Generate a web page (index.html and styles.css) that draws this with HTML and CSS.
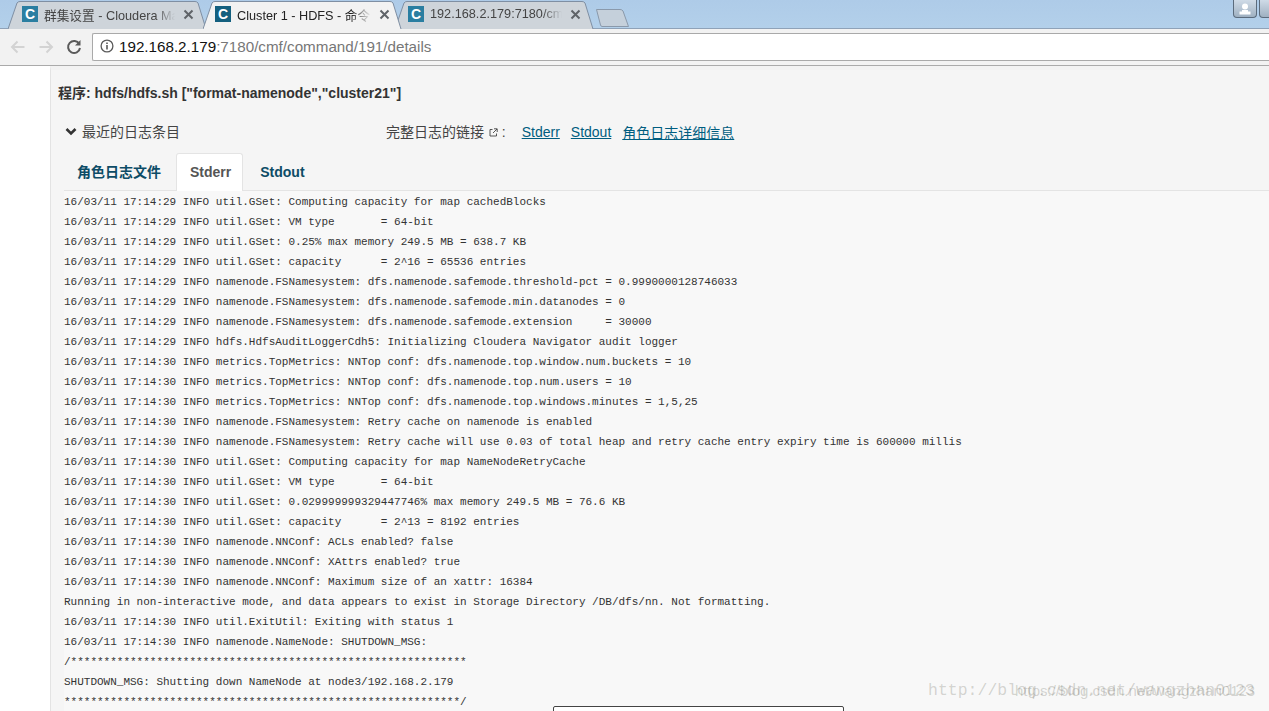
FILE: index.html
```html
<!DOCTYPE html>
<html lang="zh">
<head>
<meta charset="utf-8">
<title>Cluster 1 - HDFS - 命令</title>
<link rel="stylesheet" href="styles.css">
</head>
<body>
<header class="chrome">
  <div class="tabstrip">
    <div class="tab tab-first">
      <svg class="tab-shape" viewBox="0 0 199 28" preserveAspectRatio="none"><path d="M0 28 L9 2 Q10 .5 12 .5 L187 .5 Q189 .5 190 2 L198 28" fill="#ced4da" stroke="#7f8fa3"/></svg>
      <span class="favicon">C</span><span class="tab-title">群集设置 - Cloudera Ma</span>
      <svg class="tab-close" width="11" height="11" viewBox="0 0 11 11"><path d="M1.5 1.5 L9.5 9.5 M9.5 1.5 L1.5 9.5" stroke="#5f6368" stroke-width="2"/></svg>
    </div>
    <div class="tab tab-active">
      <svg class="tab-shape" viewBox="0 0 199 28" preserveAspectRatio="none"><path d="M0 28 L9 2 Q10 .5 12 .5 L187 .5 Q189 .5 190 2 L198 28" fill="#f2f2f2" stroke="#7f8fa3"/></svg>
      <span class="favicon favicon-active">C</span><span class="tab-title title-active">Cluster 1 - HDFS - 命令</span>
      <svg class="tab-close" width="11" height="11" viewBox="0 0 11 11"><path d="M1.5 1.5 L9.5 9.5 M9.5 1.5 L1.5 9.5" stroke="#5f6368" stroke-width="2"/></svg>
    </div>
    <div class="tab tab-last">
      <svg class="tab-shape" viewBox="0 0 199 28" preserveAspectRatio="none"><path d="M0 28 L9 2 Q10 .5 12 .5 L187 .5 Q189 .5 190 2 L198 28" fill="#ced4da" stroke="#7f8fa3"/></svg>
      <span class="favicon">C</span><span class="tab-title">192.168.2.179:7180/cm</span>
      <svg class="tab-close" width="11" height="11" viewBox="0 0 11 11"><path d="M1.5 1.5 L9.5 9.5 M9.5 1.5 L1.5 9.5" stroke="#5f6368" stroke-width="2"/></svg>
    </div>
    <svg class="newtab" width="36" height="20" viewBox="0 0 36 20"><path d="M1.5 1.5 L25 1.5 Q27 1.5 28 3 L33.5 18.5 L7 18.5 Q6 18.5 5.5 17 Z" fill="#c5d0db" stroke="#8a99ab"/></svg>
    <div class="win-btn">
      <svg width="14" height="12" viewBox="0 0 14 12"><circle cx="7" cy="3.5" r="3" fill="#fff"/><path d="M1.5 8.5 H12.5 V11.5 H1.5 Z M4 7 H10 V8.5 H4 Z" fill="#fff"/></svg>
    </div>
    <div class="win-btn win-btn-cut"></div>
  </div>
  <div class="toolbar">
    <svg class="nav-icon" width="18" height="18" viewBox="0 0 18 18"><path d="M15.5 9 H3.5 M8.5 3.5 L3 9 L8.5 14.5" fill="none" stroke="#d3d3d3" stroke-width="2"/></svg>
    <svg class="nav-icon" width="18" height="18" viewBox="0 0 18 18"><path d="M2.5 9 H14.5 M9.5 3.5 L15 9 L9.5 14.5" fill="none" stroke="#d3d3d3" stroke-width="2"/></svg>
    <svg class="nav-icon" width="18" height="18" viewBox="0 0 18 18"><path d="M14.3 6 A6 6 0 1 0 15 10" fill="none" stroke="#5a5a5a" stroke-width="2"/><path d="M15.5 2 V7.5 H10 Z" fill="#5a5a5a"/></svg>
    <div class="omnibox">
      <svg class="info" width="14" height="14" viewBox="0 0 14 14"><circle cx="7" cy="7" r="5.9" fill="none" stroke="#5a5a5a" stroke-width="1.3"/><path d="M7 6 V10.5 M7 3.4 V5" stroke="#5a5a5a" stroke-width="1.6"/></svg>
      <span class="url-host">192.168.2.179</span><span class="url-rest">:7180/cmf/command/191/details</span>
    </div>
  </div>
</header>
<div class="page">
  <main class="content">
    <h1 class="program">程序: hdfs/hdfs.sh ["format-namenode","cluster21"]</h1>
    <div class="log-head">
      <div class="recent">
        <svg class="chevron" width="12" height="9" viewBox="0 0 12 9"><path d="M1.5 2 L6 6.5 L10.5 2" fill="none" stroke="#333" stroke-width="2.6"/></svg>
        <span>最近的日志条目</span>
      </div>
      <div class="full-links">
        <span class="links-label">完整日志的链接
          <svg class="ext" width="9" height="9" viewBox="0 0 9 9"><path d="M3.5 1.5 H1 V8 H7.5 V5.5 M5 .8 H8.2 V4 M8 1 L4 5" fill="none" stroke="#444" stroke-width=".9"/></svg> :</span>
        <a class="link" href="#">Stderr</a>
        <a class="link" href="#">Stdout</a>
        <a class="link" href="#">角色日志详细信息</a>
      </div>
    </div>
    <nav class="tabs">
      <a class="nav-tab" href="#">角色日志文件</a>
      <a class="nav-tab nav-tab-active" href="#">Stderr</a>
      <a class="nav-tab" href="#">Stdout</a>
    </nav>
    <pre class="log">16/03/11 17:14:29 INFO util.GSet: Computing capacity for map cachedBlocks
16/03/11 17:14:29 INFO util.GSet: VM type       = 64-bit
16/03/11 17:14:29 INFO util.GSet: 0.25% max memory 249.5 MB = 638.7 KB
16/03/11 17:14:29 INFO util.GSet: capacity      = 2^16 = 65536 entries
16/03/11 17:14:29 INFO namenode.FSNamesystem: dfs.namenode.safemode.threshold-pct = 0.9990000128746033
16/03/11 17:14:29 INFO namenode.FSNamesystem: dfs.namenode.safemode.min.datanodes = 0
16/03/11 17:14:29 INFO namenode.FSNamesystem: dfs.namenode.safemode.extension     = 30000
16/03/11 17:14:29 INFO hdfs.HdfsAuditLoggerCdh5: Initializing Cloudera Navigator audit logger
16/03/11 17:14:30 INFO metrics.TopMetrics: NNTop conf: dfs.namenode.top.window.num.buckets = 10
16/03/11 17:14:30 INFO metrics.TopMetrics: NNTop conf: dfs.namenode.top.num.users = 10
16/03/11 17:14:30 INFO metrics.TopMetrics: NNTop conf: dfs.namenode.top.windows.minutes = 1,5,25
16/03/11 17:14:30 INFO namenode.FSNamesystem: Retry cache on namenode is enabled
16/03/11 17:14:30 INFO namenode.FSNamesystem: Retry cache will use 0.03 of total heap and retry cache entry expiry time is 600000 millis
16/03/11 17:14:30 INFO util.GSet: Computing capacity for map NameNodeRetryCache
16/03/11 17:14:30 INFO util.GSet: VM type       = 64-bit
16/03/11 17:14:30 INFO util.GSet: 0.029999999329447746% max memory 249.5 MB = 76.6 KB
16/03/11 17:14:30 INFO util.GSet: capacity      = 2^13 = 8192 entries
16/03/11 17:14:30 INFO namenode.NNConf: ACLs enabled? false
16/03/11 17:14:30 INFO namenode.NNConf: XAttrs enabled? true
16/03/11 17:14:30 INFO namenode.NNConf: Maximum size of an xattr: 16384
Running in non-interactive mode, and data appears to exist in Storage Directory /DB/dfs/nn. Not formatting.
16/03/11 17:14:30 INFO util.ExitUtil: Exiting with status 1
16/03/11 17:14:30 INFO namenode.NameNode: SHUTDOWN_MSG:
/************************************************************
SHUTDOWN_MSG: Shutting down NameNode at node3/192.168.2.179
************************************************************/</pre>
  </main>
  <div class="popup"></div>
  <div class="watermark">http://blog.csdn.net/wangzhan0123</div>
  <div class="watermark watermark-top">https://blog.csdn.net/wangzhan0123</div>
</div>
</body>
</html>
```

FILE: styles.css
```css
* { box-sizing: border-box; }
html, body { margin: 0; height: 711px; overflow: hidden; background: #fff; }
body { font-family: "Liberation Sans", "Noto Sans CJK SC", sans-serif; color: #333; }

.chrome { height: 66px; display: flex; flex-direction: column; }
.tabstrip {
  height: 29px; flex: none; display: flex; align-items: flex-end; padding-left: 8px;
  background: linear-gradient(#aecbe8, #b3d0ea); border-bottom: 1px solid #8fa2b8; position: relative;
}
.tab {
  position: relative; height: 28px; width: 199px; flex: none; margin-bottom: -1px;
  display: flex; align-items: center; padding: 0 13px 2px 14px; font-size: 12.7px; color: #444;
}
.tab-first { margin-right: -4px; }
.tab-active { z-index: 2; margin-right: -7px; padding: 0 12px 2px 12px; }
.tab-last { padding: 0 13px 2px 13px; }
.tab-shape { position: absolute; inset: 0; width: 100%; height: 100%; }
.favicon {
  position: relative; width: 16px; height: 16px; flex: none; margin-right: 6px;
  background: #2a7ea1; color: #fff; font: bold 14px/16px "Liberation Sans", sans-serif; text-align: center;
}
.favicon-active { background: #14607f; }
.tab-title {
  position: relative; flex: 1; white-space: nowrap; overflow: hidden; min-width: 0;
  -webkit-mask-image: linear-gradient(90deg, #000 85%, transparent);
  mask-image: linear-gradient(90deg, #000 85%, transparent);
}
.title-active { color: #222; }
.tab-close { position: relative; flex: none; margin-left: 8px; }
.newtab { margin-left: 1px; flex: none; }
.win-btn {
  position: relative; margin-left: auto; align-self: flex-start; width: 24px; height: 18px; flex: none;
  border: 1px solid #5b6b7c; border-top: 0; border-radius: 0 0 4px 4px;
  background: linear-gradient(#cfdbe7, #9fb0c1); display: flex; align-items: center; justify-content: center;
}
.win-btn-cut { margin-left: 2px; margin-right: -14px; }

.toolbar {
  height: 37px; flex: none; display: flex; align-items: center; gap: 10px; padding: 0 0 1px 9px;
  background: #f2f2f2; border-bottom: 1px solid #aaa;
}
.nav-icon { flex: none; }
.omnibox {
  flex: 1; height: 28px; margin-left: -1px; align-self: flex-start; margin-top: 4px;
  display: flex; align-items: center; padding: 0 0 2px 7px;
  background: #fff; border: 1px solid #a9a9a9; border-right: 0; border-radius: 2px 0 0 2px; font-size: 15.2px;
}
.info { margin-right: 5px; flex: none; }
.url-host { color: #111; }
.url-rest { color: #777; }

.page { position: relative; height: 645px; padding-left: 50px; background: #fff; }
.content {
  height: 100%; padding: 13px 0 0 7px; background: #f5f5f5; border-left: 1px solid #e3e3e3; border-top: 4px solid #f2f2f2;
}
.program { margin: 0; font-size: 14px; line-height: 20px; font-weight: bold; color: #333; }
.log-head { display: flex; margin-top: 18px; height: 20px; align-items: center; font-size: 14px; }
.recent { width: 328px; flex: none; display: flex; align-items: center; gap: 5px; padding-left: 7px; color: #444; }
.full-links { display: flex; align-items: center; gap: 11px; color: #444; }
.links-label { margin-right: 5px; }
.ext { margin-left: 1px; }
.link { color: #005d80; text-decoration: underline; font-size: 14px; padding-top: 2px; }
.tabs { display: flex; margin: 12px 0 0 6px; height: 38px; border-bottom: 1px solid #e4e4e4; }
.nav-tab {
  height: 38px; padding: 0 13px; line-height: 37px; font-size: 14px; font-weight: bold;
  color: #0d4c66; text-decoration: none; border: 1px solid transparent; border-bottom: 0;
}
.nav-tab:first-child { margin-right: 1px; padding-left: 12px; }
.nav-tab:last-child { margin-left: 3px; }
.nav-tab-active { padding: 0 11px 0 13px; background: #fff; color: #555; border-color: #e4e4e4; border-radius: 3px 3px 0 0; }
.log {
  margin: 0 0 0 6px; padding: 1px 0 0; background: #f8f8f8; font: 11px/20px "Liberation Mono", monospace; color: #333; white-space: pre;
}
.popup {
  position: absolute; left: 553px; top: 640px; width: 291px; height: 20px;
  background: #fff; border: 1px solid #444; border-radius: 2px 2px 0 0;
}
.watermark {
  position: absolute; left: 928px; top: 612px; font: 16.5px/26px "Liberation Mono", monospace; color: rgba(120,120,110,.3); white-space: nowrap;
}
.watermark-top { left: 1015px; font: 15px/26px "Liberation Sans", sans-serif; }
```
